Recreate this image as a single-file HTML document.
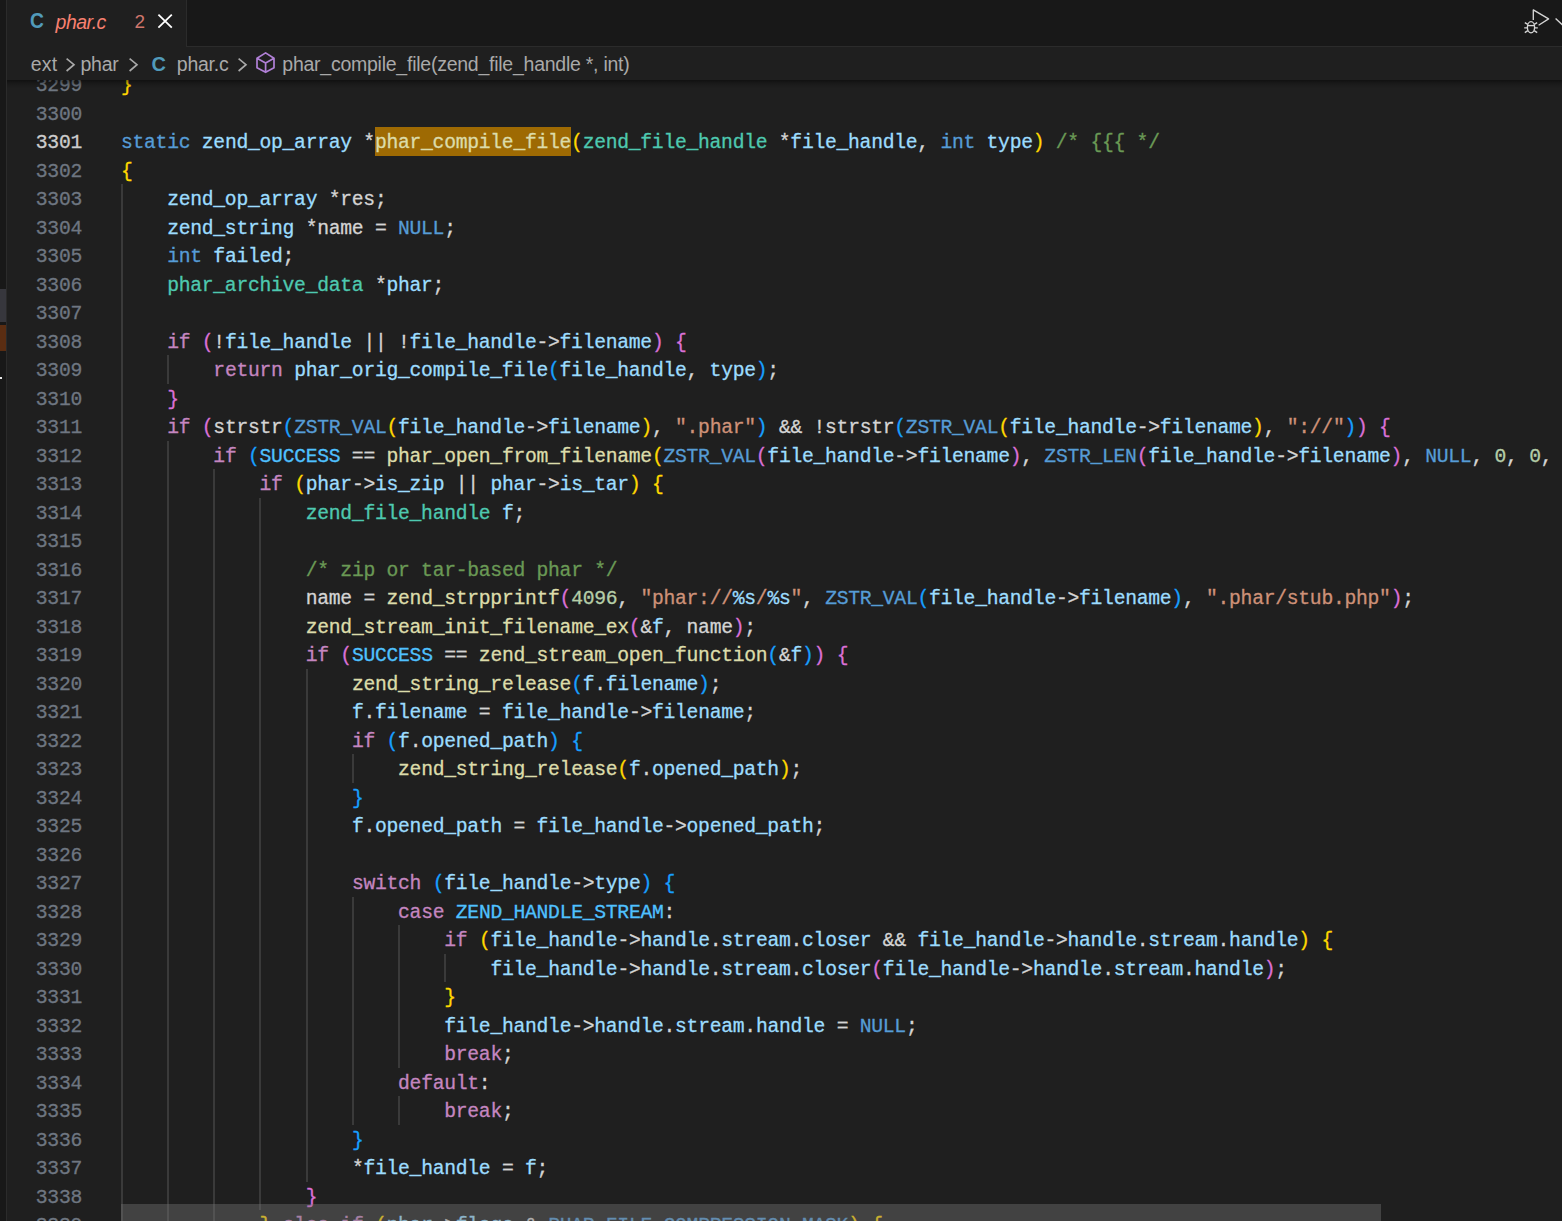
<!DOCTYPE html>
<html><head><meta charset="utf-8">
<style>
html,body{margin:0;padding:0;}
body{width:1562px;height:1221px;overflow:hidden;background:#1f1f1f;position:relative;font-family:"Liberation Sans",sans-serif;}
#left{position:absolute;left:0;top:0;width:6px;height:1221px;background:#181818;border-right:1px solid #2b2b2b;}
#left .a{position:absolute;left:0;width:6px;top:289px;height:33px;background:#37373d;}
#left .b{position:absolute;left:0;width:6px;top:325px;height:26px;background:#5a2d12;}
#left .c{position:absolute;left:0;width:2px;top:377px;height:2px;background:#e8e8e8;}
#editor{position:absolute;left:7px;top:0;width:1555px;height:1221px;overflow:hidden;}
#code{position:absolute;left:-7px;top:0;width:1562px;height:1221px;font-family:"Liberation Mono",monospace;font-size:19.7px;letter-spacing:-0.275px;line-height:28.5px;white-space:pre;-webkit-text-stroke:0.3px;}
.ln{position:absolute;left:8px;width:74px;text-align:right;color:#6e7681;height:28.5px;}
.ln.cur{color:#cccccc;}
.cl{position:absolute;height:28.5px;color:#d4d4d4;}
.g{position:absolute;width:2px;height:28.5px;background:#3a3a3a;}
.k{color:#569cd6}.c{color:#c586c0}.t{color:#4ec9b0}.v{color:#9cdcfe}.f{color:#dcdcaa}.n{color:#b5cea8}
.s{color:#ce9178}.m{color:#6a9955}.e{color:#4fc1ff}.p{color:#d4d4d4}.w{color:#d4d4d4}
.b1{color:#ffd700}.b2{color:#da70d6}.b3{color:#179fff}
.hl{color:#dcdcaa;}
.hlb{position:absolute;background:#9e6a03;height:28.5px;}
#tabs{position:absolute;left:7px;top:0;width:1555px;height:46px;background:#181818;border-bottom:1px solid #2b2b2b;}
#tab{position:absolute;left:0;top:0;width:179px;height:47px;background:#1f1f1f;border-right:1px solid #2b2b2b;}
#bc{position:absolute;left:7px;top:47px;width:1555px;height:33px;background:#1f1f1f;color:#a9a9a9;font-size:19.5px;}
#shadow{position:absolute;left:7px;top:80px;width:1555px;height:9px;background:linear-gradient(to bottom,rgba(0,0,0,0.46) 0%,rgba(0,0,0,0.3) 22%,rgba(0,0,0,0.17) 45%,rgba(0,0,0,0.07) 72%,rgba(0,0,0,0) 100%);}
#hscroll{position:absolute;left:121px;top:1204px;width:1260px;height:17px;background:rgba(121,121,121,0.4);}
.abs{position:absolute;white-space:pre;}
.bt{font-size:19.5px;line-height:24px;letter-spacing:-0.25px;color:#a9a9a9;}
</style></head><body>
<div id="editor"><div id="code">
<div class="hlb" style="left:375.2px;top:127.0px;width:196.3px"></div>
<div class="ln" style="top:72.0px">3299</div>
<div class="cl" style="left:121.00px;top:72.0px"><span class="b1">}</span></div>
<div class="ln" style="top:100.5px">3300</div>
<div class="ln cur" style="top:129.0px">3301</div>
<div class="cl" style="left:121.00px;top:129.0px"><span class="k">static</span><span class="p"> </span><span class="v">zend_op_array</span><span class="p"> *</span><span class="hl">phar_compile_file</span><span class="b1">(</span><span class="t">zend_file_handle</span><span class="p"> *</span><span class="v">file_handle</span><span class="p">, </span><span class="k">int</span><span class="p"> </span><span class="v">type</span><span class="b1">)</span><span class="p"> </span><span class="m">/* {{{ */</span></div>
<div class="ln" style="top:157.5px">3302</div>
<div class="cl" style="left:121.00px;top:157.5px"><span class="b1">{</span></div>
<div class="ln" style="top:186.0px">3303</div>
<div class="g" style="left:121px;top:184.0px"></div>
<div class="cl" style="left:167.18px;top:186.0px"><span class="v">zend_op_array</span><span class="p"> *res;</span></div>
<div class="ln" style="top:214.5px">3304</div>
<div class="g" style="left:121px;top:212.5px"></div>
<div class="cl" style="left:167.18px;top:214.5px"><span class="v">zend_string</span><span class="p"> *name = </span><span class="k">NULL</span><span class="p">;</span></div>
<div class="ln" style="top:243.0px">3305</div>
<div class="g" style="left:121px;top:241.0px"></div>
<div class="cl" style="left:167.18px;top:243.0px"><span class="k">int</span><span class="p"> </span><span class="v">failed</span><span class="p">;</span></div>
<div class="ln" style="top:271.5px">3306</div>
<div class="g" style="left:121px;top:269.5px"></div>
<div class="cl" style="left:167.18px;top:271.5px"><span class="t">phar_archive_data</span><span class="p"> *</span><span class="v">phar</span><span class="p">;</span></div>
<div class="ln" style="top:300.0px">3307</div>
<div class="g" style="left:121px;top:298.0px"></div>
<div class="ln" style="top:328.5px">3308</div>
<div class="g" style="left:121px;top:326.5px"></div>
<div class="cl" style="left:167.18px;top:328.5px"><span class="c">if</span><span class="p"> </span><span class="b2">(</span><span class="p">!</span><span class="v">file_handle</span><span class="p"> || !</span><span class="v">file_handle</span><span class="p">-&gt;</span><span class="v">filename</span><span class="b2">)</span><span class="p"> </span><span class="b2">{</span></div>
<div class="ln" style="top:357.0px">3309</div>
<div class="g" style="left:121px;top:355.0px"></div>
<div class="g" style="left:167px;top:355.0px"></div>
<div class="cl" style="left:213.36px;top:357.0px"><span class="c">return</span><span class="p"> </span><span class="v">phar_orig_compile_file</span><span class="b3">(</span><span class="v">file_handle</span><span class="p">, </span><span class="v">type</span><span class="b3">)</span><span class="p">;</span></div>
<div class="ln" style="top:385.5px">3310</div>
<div class="g" style="left:121px;top:383.5px"></div>
<div class="cl" style="left:167.18px;top:385.5px"><span class="b2">}</span></div>
<div class="ln" style="top:414.0px">3311</div>
<div class="g" style="left:121px;top:412.0px"></div>
<div class="cl" style="left:167.18px;top:414.0px"><span class="c">if</span><span class="p"> </span><span class="b2">(</span><span class="w">strstr</span><span class="b3">(</span><span class="k">ZSTR_VAL</span><span class="b1">(</span><span class="v">file_handle</span><span class="p">-&gt;</span><span class="v">filename</span><span class="b1">)</span><span class="p">, </span><span class="s">".phar"</span><span class="b3">)</span><span class="p"> &amp;&amp; !</span><span class="w">strstr</span><span class="b3">(</span><span class="k">ZSTR_VAL</span><span class="b1">(</span><span class="v">file_handle</span><span class="p">-&gt;</span><span class="v">filename</span><span class="b1">)</span><span class="p">, </span><span class="s">"://"</span><span class="b3">)</span><span class="b2">)</span><span class="p"> </span><span class="b2">{</span></div>
<div class="ln" style="top:442.5px">3312</div>
<div class="g" style="left:121px;top:440.5px"></div>
<div class="g" style="left:167px;top:440.5px"></div>
<div class="cl" style="left:213.36px;top:442.5px"><span class="c">if</span><span class="p"> </span><span class="b3">(</span><span class="e">SUCCESS</span><span class="p"> == </span><span class="f">phar_open_from_filename</span><span class="b1">(</span><span class="k">ZSTR_VAL</span><span class="b2">(</span><span class="v">file_handle</span><span class="p">-&gt;</span><span class="v">filename</span><span class="b2">)</span><span class="p">, </span><span class="k">ZSTR_LEN</span><span class="b2">(</span><span class="v">file_handle</span><span class="p">-&gt;</span><span class="v">filename</span><span class="b2">)</span><span class="p">, </span><span class="k">NULL</span><span class="p">, </span><span class="n">0</span><span class="p">, </span><span class="n">0</span><span class="p">, &amp;</span><span class="v">phar</span><span class="p">, </span><span class="k">NULL</span><span class="b1">)</span><span class="b3">)</span><span class="p"> </span><span class="b3">{</span></div>
<div class="ln" style="top:471.0px">3313</div>
<div class="g" style="left:121px;top:469.0px"></div>
<div class="g" style="left:167px;top:469.0px"></div>
<div class="g" style="left:213px;top:469.0px"></div>
<div class="cl" style="left:259.54px;top:471.0px"><span class="c">if</span><span class="p"> </span><span class="b1">(</span><span class="v">phar</span><span class="p">-&gt;</span><span class="v">is_zip</span><span class="p"> || </span><span class="v">phar</span><span class="p">-&gt;</span><span class="v">is_tar</span><span class="b1">)</span><span class="p"> </span><span class="b1">{</span></div>
<div class="ln" style="top:499.5px">3314</div>
<div class="g" style="left:121px;top:497.5px"></div>
<div class="g" style="left:167px;top:497.5px"></div>
<div class="g" style="left:213px;top:497.5px"></div>
<div class="g" style="left:259px;top:497.5px"></div>
<div class="cl" style="left:305.72px;top:499.5px"><span class="t">zend_file_handle</span><span class="p"> </span><span class="v">f</span><span class="p">;</span></div>
<div class="ln" style="top:528.0px">3315</div>
<div class="g" style="left:121px;top:526.0px"></div>
<div class="g" style="left:167px;top:526.0px"></div>
<div class="g" style="left:213px;top:526.0px"></div>
<div class="g" style="left:259px;top:526.0px"></div>
<div class="ln" style="top:556.5px">3316</div>
<div class="g" style="left:121px;top:554.5px"></div>
<div class="g" style="left:167px;top:554.5px"></div>
<div class="g" style="left:213px;top:554.5px"></div>
<div class="g" style="left:259px;top:554.5px"></div>
<div class="cl" style="left:305.72px;top:556.5px"><span class="m">/* zip or tar-based phar */</span></div>
<div class="ln" style="top:585.0px">3317</div>
<div class="g" style="left:121px;top:583.0px"></div>
<div class="g" style="left:167px;top:583.0px"></div>
<div class="g" style="left:213px;top:583.0px"></div>
<div class="g" style="left:259px;top:583.0px"></div>
<div class="cl" style="left:305.72px;top:585.0px"><span class="p">name</span><span class="p"> = </span><span class="f">zend_strpprintf</span><span class="b2">(</span><span class="n">4096</span><span class="p">, </span><span class="s">"phar://</span><span class="v">%s</span><span class="s">/</span><span class="v">%s</span><span class="s">"</span><span class="p">, </span><span class="k">ZSTR_VAL</span><span class="b3">(</span><span class="v">file_handle</span><span class="p">-&gt;</span><span class="v">filename</span><span class="b3">)</span><span class="p">, </span><span class="s">".phar/stub.php"</span><span class="b2">)</span><span class="p">;</span></div>
<div class="ln" style="top:613.5px">3318</div>
<div class="g" style="left:121px;top:611.5px"></div>
<div class="g" style="left:167px;top:611.5px"></div>
<div class="g" style="left:213px;top:611.5px"></div>
<div class="g" style="left:259px;top:611.5px"></div>
<div class="cl" style="left:305.72px;top:613.5px"><span class="f">zend_stream_init_filename_ex</span><span class="b2">(</span><span class="p">&amp;</span><span class="v">f</span><span class="p">, name</span><span class="b2">)</span><span class="p">;</span></div>
<div class="ln" style="top:642.0px">3319</div>
<div class="g" style="left:121px;top:640.0px"></div>
<div class="g" style="left:167px;top:640.0px"></div>
<div class="g" style="left:213px;top:640.0px"></div>
<div class="g" style="left:259px;top:640.0px"></div>
<div class="cl" style="left:305.72px;top:642.0px"><span class="c">if</span><span class="p"> </span><span class="b2">(</span><span class="e">SUCCESS</span><span class="p"> == </span><span class="f">zend_stream_open_function</span><span class="b3">(</span><span class="p">&amp;</span><span class="v">f</span><span class="b3">)</span><span class="b2">)</span><span class="p"> </span><span class="b2">{</span></div>
<div class="ln" style="top:670.5px">3320</div>
<div class="g" style="left:121px;top:668.5px"></div>
<div class="g" style="left:167px;top:668.5px"></div>
<div class="g" style="left:213px;top:668.5px"></div>
<div class="g" style="left:259px;top:668.5px"></div>
<div class="g" style="left:306px;top:668.5px"></div>
<div class="cl" style="left:351.90px;top:670.5px"><span class="f">zend_string_release</span><span class="b3">(</span><span class="v">f</span><span class="p">.</span><span class="v">filename</span><span class="b3">)</span><span class="p">;</span></div>
<div class="ln" style="top:699.0px">3321</div>
<div class="g" style="left:121px;top:697.0px"></div>
<div class="g" style="left:167px;top:697.0px"></div>
<div class="g" style="left:213px;top:697.0px"></div>
<div class="g" style="left:259px;top:697.0px"></div>
<div class="g" style="left:306px;top:697.0px"></div>
<div class="cl" style="left:351.90px;top:699.0px"><span class="v">f</span><span class="p">.</span><span class="v">filename</span><span class="p"> = </span><span class="v">file_handle</span><span class="p">-&gt;</span><span class="v">filename</span><span class="p">;</span></div>
<div class="ln" style="top:727.5px">3322</div>
<div class="g" style="left:121px;top:725.5px"></div>
<div class="g" style="left:167px;top:725.5px"></div>
<div class="g" style="left:213px;top:725.5px"></div>
<div class="g" style="left:259px;top:725.5px"></div>
<div class="g" style="left:306px;top:725.5px"></div>
<div class="cl" style="left:351.90px;top:727.5px"><span class="c">if</span><span class="p"> </span><span class="b3">(</span><span class="v">f</span><span class="p">.</span><span class="v">opened_path</span><span class="b3">)</span><span class="p"> </span><span class="b3">{</span></div>
<div class="ln" style="top:756.0px">3323</div>
<div class="g" style="left:121px;top:754.0px"></div>
<div class="g" style="left:167px;top:754.0px"></div>
<div class="g" style="left:213px;top:754.0px"></div>
<div class="g" style="left:259px;top:754.0px"></div>
<div class="g" style="left:306px;top:754.0px"></div>
<div class="g" style="left:352px;top:754.0px"></div>
<div class="cl" style="left:398.08px;top:756.0px"><span class="f">zend_string_release</span><span class="b1">(</span><span class="v">f</span><span class="p">.</span><span class="v">opened_path</span><span class="b1">)</span><span class="p">;</span></div>
<div class="ln" style="top:784.5px">3324</div>
<div class="g" style="left:121px;top:782.5px"></div>
<div class="g" style="left:167px;top:782.5px"></div>
<div class="g" style="left:213px;top:782.5px"></div>
<div class="g" style="left:259px;top:782.5px"></div>
<div class="g" style="left:306px;top:782.5px"></div>
<div class="cl" style="left:351.90px;top:784.5px"><span class="b3">}</span></div>
<div class="ln" style="top:813.0px">3325</div>
<div class="g" style="left:121px;top:811.0px"></div>
<div class="g" style="left:167px;top:811.0px"></div>
<div class="g" style="left:213px;top:811.0px"></div>
<div class="g" style="left:259px;top:811.0px"></div>
<div class="g" style="left:306px;top:811.0px"></div>
<div class="cl" style="left:351.90px;top:813.0px"><span class="v">f</span><span class="p">.</span><span class="v">opened_path</span><span class="p"> = </span><span class="v">file_handle</span><span class="p">-&gt;</span><span class="v">opened_path</span><span class="p">;</span></div>
<div class="ln" style="top:841.5px">3326</div>
<div class="g" style="left:121px;top:839.5px"></div>
<div class="g" style="left:167px;top:839.5px"></div>
<div class="g" style="left:213px;top:839.5px"></div>
<div class="g" style="left:259px;top:839.5px"></div>
<div class="g" style="left:306px;top:839.5px"></div>
<div class="ln" style="top:870.0px">3327</div>
<div class="g" style="left:121px;top:868.0px"></div>
<div class="g" style="left:167px;top:868.0px"></div>
<div class="g" style="left:213px;top:868.0px"></div>
<div class="g" style="left:259px;top:868.0px"></div>
<div class="g" style="left:306px;top:868.0px"></div>
<div class="cl" style="left:351.90px;top:870.0px"><span class="c">switch</span><span class="p"> </span><span class="b3">(</span><span class="v">file_handle</span><span class="p">-&gt;</span><span class="v">type</span><span class="b3">)</span><span class="p"> </span><span class="b3">{</span></div>
<div class="ln" style="top:898.5px">3328</div>
<div class="g" style="left:121px;top:896.5px"></div>
<div class="g" style="left:167px;top:896.5px"></div>
<div class="g" style="left:213px;top:896.5px"></div>
<div class="g" style="left:259px;top:896.5px"></div>
<div class="g" style="left:306px;top:896.5px"></div>
<div class="g" style="left:352px;top:896.5px"></div>
<div class="cl" style="left:398.08px;top:898.5px"><span class="c">case</span><span class="p"> </span><span class="e">ZEND_HANDLE_STREAM</span><span class="p">:</span></div>
<div class="ln" style="top:927.0px">3329</div>
<div class="g" style="left:121px;top:925.0px"></div>
<div class="g" style="left:167px;top:925.0px"></div>
<div class="g" style="left:213px;top:925.0px"></div>
<div class="g" style="left:259px;top:925.0px"></div>
<div class="g" style="left:306px;top:925.0px"></div>
<div class="g" style="left:352px;top:925.0px"></div>
<div class="g" style="left:398px;top:925.0px"></div>
<div class="cl" style="left:444.26px;top:927.0px"><span class="c">if</span><span class="p"> </span><span class="b1">(</span><span class="v">file_handle</span><span class="p">-&gt;</span><span class="v">handle</span><span class="p">.</span><span class="v">stream</span><span class="p">.</span><span class="v">closer</span><span class="p"> &amp;&amp; </span><span class="v">file_handle</span><span class="p">-&gt;</span><span class="v">handle</span><span class="p">.</span><span class="v">stream</span><span class="p">.</span><span class="v">handle</span><span class="b1">)</span><span class="p"> </span><span class="b1">{</span></div>
<div class="ln" style="top:955.5px">3330</div>
<div class="g" style="left:121px;top:953.5px"></div>
<div class="g" style="left:167px;top:953.5px"></div>
<div class="g" style="left:213px;top:953.5px"></div>
<div class="g" style="left:259px;top:953.5px"></div>
<div class="g" style="left:306px;top:953.5px"></div>
<div class="g" style="left:352px;top:953.5px"></div>
<div class="g" style="left:398px;top:953.5px"></div>
<div class="g" style="left:444px;top:953.5px"></div>
<div class="cl" style="left:490.44px;top:955.5px"><span class="v">file_handle</span><span class="p">-&gt;</span><span class="v">handle</span><span class="p">.</span><span class="v">stream</span><span class="p">.</span><span class="v">closer</span><span class="b2">(</span><span class="v">file_handle</span><span class="p">-&gt;</span><span class="v">handle</span><span class="p">.</span><span class="v">stream</span><span class="p">.</span><span class="v">handle</span><span class="b2">)</span><span class="p">;</span></div>
<div class="ln" style="top:984.0px">3331</div>
<div class="g" style="left:121px;top:982.0px"></div>
<div class="g" style="left:167px;top:982.0px"></div>
<div class="g" style="left:213px;top:982.0px"></div>
<div class="g" style="left:259px;top:982.0px"></div>
<div class="g" style="left:306px;top:982.0px"></div>
<div class="g" style="left:352px;top:982.0px"></div>
<div class="g" style="left:398px;top:982.0px"></div>
<div class="cl" style="left:444.26px;top:984.0px"><span class="b1">}</span></div>
<div class="ln" style="top:1012.5px">3332</div>
<div class="g" style="left:121px;top:1010.5px"></div>
<div class="g" style="left:167px;top:1010.5px"></div>
<div class="g" style="left:213px;top:1010.5px"></div>
<div class="g" style="left:259px;top:1010.5px"></div>
<div class="g" style="left:306px;top:1010.5px"></div>
<div class="g" style="left:352px;top:1010.5px"></div>
<div class="g" style="left:398px;top:1010.5px"></div>
<div class="cl" style="left:444.26px;top:1012.5px"><span class="v">file_handle</span><span class="p">-&gt;</span><span class="v">handle</span><span class="p">.</span><span class="v">stream</span><span class="p">.</span><span class="v">handle</span><span class="p"> = </span><span class="k">NULL</span><span class="p">;</span></div>
<div class="ln" style="top:1041.0px">3333</div>
<div class="g" style="left:121px;top:1039.0px"></div>
<div class="g" style="left:167px;top:1039.0px"></div>
<div class="g" style="left:213px;top:1039.0px"></div>
<div class="g" style="left:259px;top:1039.0px"></div>
<div class="g" style="left:306px;top:1039.0px"></div>
<div class="g" style="left:352px;top:1039.0px"></div>
<div class="g" style="left:398px;top:1039.0px"></div>
<div class="cl" style="left:444.26px;top:1041.0px"><span class="c">break</span><span class="p">;</span></div>
<div class="ln" style="top:1069.5px">3334</div>
<div class="g" style="left:121px;top:1067.5px"></div>
<div class="g" style="left:167px;top:1067.5px"></div>
<div class="g" style="left:213px;top:1067.5px"></div>
<div class="g" style="left:259px;top:1067.5px"></div>
<div class="g" style="left:306px;top:1067.5px"></div>
<div class="g" style="left:352px;top:1067.5px"></div>
<div class="cl" style="left:398.08px;top:1069.5px"><span class="c">default</span><span class="p">:</span></div>
<div class="ln" style="top:1098.0px">3335</div>
<div class="g" style="left:121px;top:1096.0px"></div>
<div class="g" style="left:167px;top:1096.0px"></div>
<div class="g" style="left:213px;top:1096.0px"></div>
<div class="g" style="left:259px;top:1096.0px"></div>
<div class="g" style="left:306px;top:1096.0px"></div>
<div class="g" style="left:352px;top:1096.0px"></div>
<div class="g" style="left:398px;top:1096.0px"></div>
<div class="cl" style="left:444.26px;top:1098.0px"><span class="c">break</span><span class="p">;</span></div>
<div class="ln" style="top:1126.5px">3336</div>
<div class="g" style="left:121px;top:1124.5px"></div>
<div class="g" style="left:167px;top:1124.5px"></div>
<div class="g" style="left:213px;top:1124.5px"></div>
<div class="g" style="left:259px;top:1124.5px"></div>
<div class="g" style="left:306px;top:1124.5px"></div>
<div class="cl" style="left:351.90px;top:1126.5px"><span class="b3">}</span></div>
<div class="ln" style="top:1155.0px">3337</div>
<div class="g" style="left:121px;top:1153.0px"></div>
<div class="g" style="left:167px;top:1153.0px"></div>
<div class="g" style="left:213px;top:1153.0px"></div>
<div class="g" style="left:259px;top:1153.0px"></div>
<div class="g" style="left:306px;top:1153.0px"></div>
<div class="cl" style="left:351.90px;top:1155.0px"><span class="p">*</span><span class="v">file_handle</span><span class="p"> = </span><span class="v">f</span><span class="p">;</span></div>
<div class="ln" style="top:1183.5px">3338</div>
<div class="g" style="left:121px;top:1181.5px"></div>
<div class="g" style="left:167px;top:1181.5px"></div>
<div class="g" style="left:213px;top:1181.5px"></div>
<div class="g" style="left:259px;top:1181.5px"></div>
<div class="cl" style="left:305.72px;top:1183.5px"><span class="b2">}</span></div>
<div class="ln" style="top:1212.0px">3339</div>
<div class="g" style="left:121px;top:1210.0px"></div>
<div class="g" style="left:167px;top:1210.0px"></div>
<div class="g" style="left:213px;top:1210.0px"></div>
<div class="cl" style="left:259.54px;top:1212.0px"><span class="b1">}</span><span class="p"> </span><span class="c">else</span><span class="p"> </span><span class="c">if</span><span class="p"> </span><span class="b1">(</span><span class="v">phar</span><span class="p">-&gt;</span><span class="v">flags</span><span class="p"> &amp; </span><span class="k">PHAR_FILE_COMPRESSION_MASK</span><span class="b1">)</span><span class="p"> </span><span class="b1">{</span></div>
</div></div>
<div id="hscroll"></div>
<div id="shadow"></div>
<div id="tabs"><div id="tab">
<span class="abs" style="left:22.6px;top:8.8px;font-size:21.4px;font-weight:bold;color:#519aba;line-height:24px;transform:scaleX(0.9);transform-origin:left top;">C</span>
<span class="abs" style="left:48.6px;top:9.5px;font-size:19.5px;font-style:italic;color:#f88070;line-height:24px;letter-spacing:-0.55px">phar.c</span>
<span class="abs" style="left:127.6px;top:10px;font-size:19px;color:#cf766c;line-height:24px;">2</span>
<svg class="abs" style="left:150px;top:13px" width="16" height="16" viewBox="0 0 16 16"><path d="M1.4 1.6 L14.8 14.6 M14.8 1.6 L1.4 14.6" stroke="#ffffff" stroke-width="1.8" fill="none"/></svg>
</div><svg class="abs" style="left:1513px;top:0px" width="42" height="46" viewBox="1520 0 42 46" fill="none" stroke="#d4d4d4" stroke-width="1.35" stroke-linejoin="round">
<path d="M1533.3 20 L1533.3 9.9 L1548.6 18.9 L1538.6 25.2"/>
<ellipse cx="1531" cy="27.2" rx="3.6" ry="5.6"/>
<path d="M1527.4 25.6 L1534.6 25.6"/>
<path d="M1524.8 22.6 L1527.8 24.4 M1524.2 27.8 L1527.4 27.8 M1524.8 32.6 L1527.8 30.6 M1537.2 22.6 L1534.2 24.4 M1537.8 27.8 L1534.6 27.8 M1537.2 32.6 L1534.2 30.6"/>
<path d="M1555.6 18.6 L1562.5 25"/>
</svg></div>
<div id="bc">
<span class="abs bt" style="left:23.8px;top:5px;letter-spacing:0.2px">ext</span>
<svg class="abs" style="left:57.5px;top:8.5px" width="11" height="18" viewBox="0 0 11 18"><path d="M1.6 2.6 L9.0 8.7 L1.6 15.0" stroke="#a9a9a9" stroke-width="1.65" fill="none"/></svg>
<span class="abs bt" style="left:73.5px;top:5px;">phar</span>
<svg class="abs" style="left:120.6px;top:8.5px" width="11" height="18" viewBox="0 0 11 18"><path d="M1.6 2.6 L9.0 8.7 L1.6 15.0" stroke="#a9a9a9" stroke-width="1.65" fill="none"/></svg>
<span class="abs" style="left:144.4px;top:4.5px;font-size:20px;font-weight:bold;color:#519aba;line-height:24px;letter-spacing:-1px">C</span>
<span class="abs bt" style="left:169.8px;top:5px;">phar.c</span>
<svg class="abs" style="left:229.8px;top:8.5px" width="11" height="18" viewBox="0 0 11 18"><path d="M1.6 2.6 L9.0 8.7 L1.6 15.0" stroke="#a9a9a9" stroke-width="1.65" fill="none"/></svg>
<svg class="abs" style="left:248px;top:4px" width="22" height="24" viewBox="255 51 22 24"><path d="M265.6 52.9 L274 58.2 L274 67.7 L265.6 72.3 L257 67.7 L257 58.2 Z M257 58.2 L265.6 62.9 L274 58.2 M265.6 62.9 L265.6 72.3" stroke="#b180d7" stroke-width="1.7" fill="none" stroke-linejoin="round"/></svg>
<span class="abs bt" style="left:275.3px;top:5px;">phar_compile_file(zend_file_handle *, int)</span>
</div>
<div id="left"><div class="a"></div><div class="b"></div><div class="c"></div></div>
</body></html>
